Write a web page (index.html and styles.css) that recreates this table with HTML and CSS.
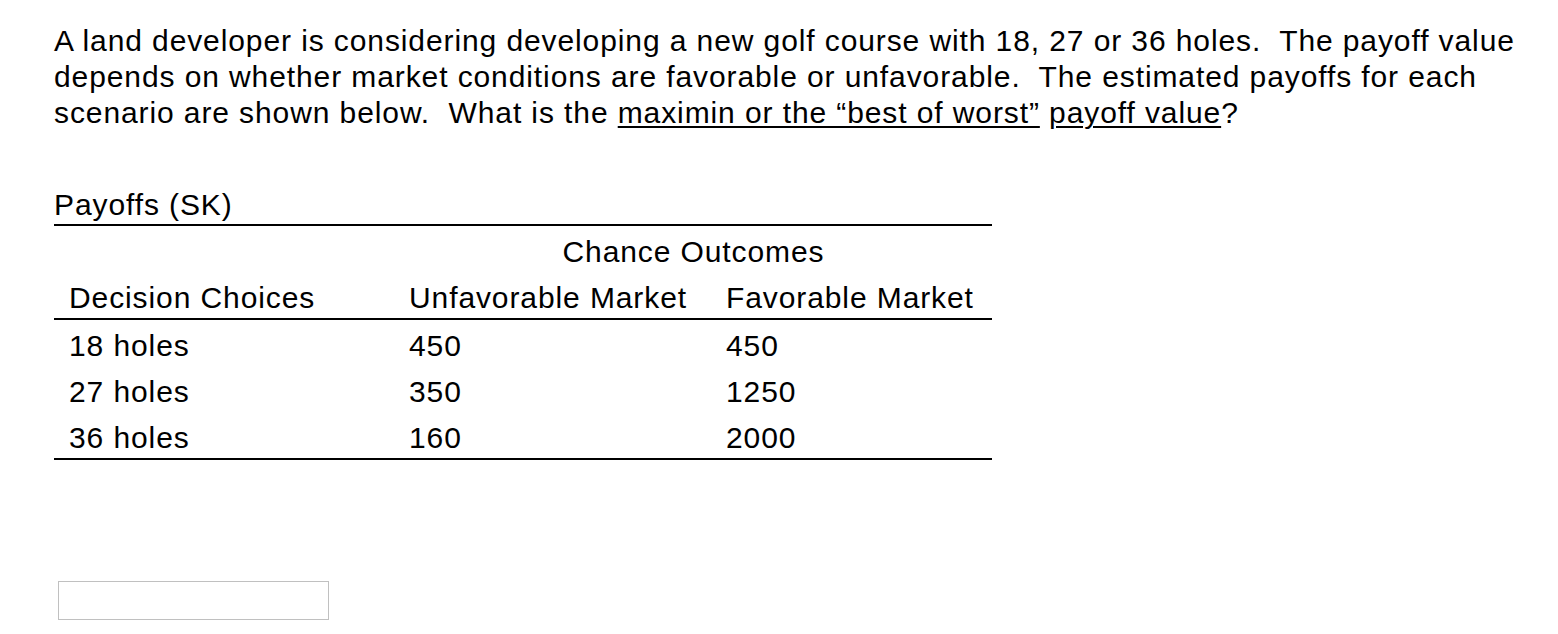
FILE: index.html
```html
<!DOCTYPE html>
<html>
<head>
<meta charset="utf-8">
<link rel="stylesheet" href="styles.css">
</head>
<body>
<div class="page">
  <p class="question">A land developer is considering developing a new golf course with 18, 27 or 36 holes.&nbsp; The payoff value depends on whether market conditions are favorable or unfavorable.&nbsp; The estimated payoffs for each scenario are shown below.&nbsp; What is the <u>maximin or the “best of worst”</u> <u>payoff value</u>?</p>
  <div class="payoffs">
    <div class="caption">Payoffs (SK)</div>
    <table class="grid">
      <tr class="chance"><td></td><td colspan="2" class="center">Chance Outcomes</td></tr>
      <tr class="head"><td>Decision Choices</td><td>Unfavorable Market</td><td>Favorable Market</td></tr>
      <tr><td>18 holes</td><td>450</td><td>450</td></tr>
      <tr><td>27 holes</td><td>350</td><td>1250</td></tr>
      <tr class="last"><td>36 holes</td><td>160</td><td>2000</td></tr>
    </table>
  </div>
  <input class="answer" type="text">
</div>
</body>
</html>
```
FILE: styles.css
```css
html, body {
  margin: 0;
  padding: 0;
  background: #fff;
}
body {
  font-family: "Liberation Sans", Arial, sans-serif;
  color: #000;
  letter-spacing: 0.9px;
}
.page {
  padding: 23px 0 0 54px;
}
.question {
  margin: 0;
  font-size: 30px;
  line-height: 36px;
  width: 1494px;
}
.question u {
  text-decoration-thickness: 2px;
  text-underline-offset: 3px;
}
.payoffs {
  margin-top: 57px;
  width: 938px;
}
.caption {
  font-size: 30px;
  line-height: 34px;
  padding-bottom: 2px;
  border-bottom: 2px solid #000;
}
.grid {
  width: 100%;
  border-collapse: collapse;
  font-size: 30px;
}
.grid td {
  padding: 6px 0 0 0;
  line-height: 40px;
  vertical-align: top;
  white-space: nowrap;
}
.grid td:first-child {
  padding-left: 15px;
  width: 340px;
}
.grid td:nth-child(2) {
  width: 317px;
}
.grid td.center {
  text-align: center;
  padding-right: 14px;
}
.grid .head td {
  border-bottom: 2px solid #000;
}
.grid .last td {
  border-bottom: 2px solid #000;
}
.answer {
  display: block;
  margin: 121px 0 0 4px;
  width: 271px;
  height: 39px;
  box-sizing: border-box;
  border: 1px solid #c0c0c0;
  padding: 0;
  outline: none;
}
```
